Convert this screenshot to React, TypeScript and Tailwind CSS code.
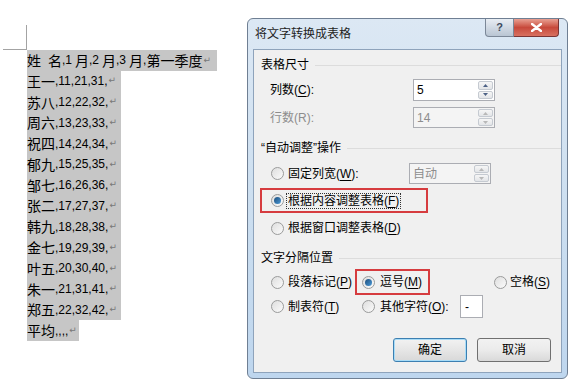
import React from "react";

const cjk = { fontFamily: '"Liberation Sans", "Noto Sans CJK SC", sans-serif' };

const rows: [string, string][] = [
  ["王一", ",11,21,31,"],
  ["苏八", ",12,22,32,"],
  ["周六", ",13,23,33,"],
  ["祝四", ",14,24,34,"],
  ["郁九", ",15,25,35,"],
  ["邹七", ",16,26,36,"],
  ["张二", ",17,27,37,"],
  ["韩九", ",18,28,38,"],
  ["金七", ",19,29,39,"],
  ["叶五", ",20,30,40,"],
  ["朱一", ",21,31,41,"],
  ["郑五", ",22,32,42,"],
];

function Ret() {
  return <span className="ml-[1px] text-[9px] text-[#777]" style={{ fontFamily: '"DejaVu Sans", sans-serif' }}>↵</span>;
}

function Han({ children }: { children: React.ReactNode }) {
  return <span className="text-[14px]" style={{ fontFamily: '"Noto Sans CJK SC", sans-serif' }}>{children}</span>;
}

function Num({ children }: { children: React.ReactNode }) {
  return <span className="text-[12px]" style={{ fontFamily: '"Liberation Sans", sans-serif' }}>{children}</span>;
}

function Radio({ on = false }: { on?: boolean }) {
  return (
    <span className="flex size-[13px] shrink-0 items-center justify-center rounded-full border border-[#9a9b9b] bg-gradient-to-br from-[#dedede] to-[#fbfbfb]">
      {on && <span className="size-[7px] rounded-full bg-gradient-to-br from-[#1e4e7c] to-[#4a9ad8]" />}
    </span>
  );
}

function U({ children }: { children: React.ReactNode }) {
  return <span className="underline underline-offset-[2px]">{children}</span>;
}

function Spin({ disabled = false }: { disabled?: boolean }) {
  const tri = disabled ? "#b8b8b8" : "#4d6185";
  return (
    <div className="flex w-[16px] flex-col gap-[1px] self-stretch py-[1px] pr-[1px]">
      <div className="flex flex-1 items-center justify-center rounded-[2px] border border-[#c5cad1] bg-gradient-to-b from-[#f6f6f6] to-[#e3e5e8]">
        <svg width="5" height="3" viewBox="0 0 5 3"><path d="M0 3 L2.5 0 L5 3Z" fill={tri} /></svg>
      </div>
      <div className="flex flex-1 items-center justify-center rounded-[2px] border border-[#c5cad1] bg-gradient-to-b from-[#f6f6f6] to-[#e3e5e8]">
        <svg width="5" height="3" viewBox="0 0 5 3"><path d="M0 0 L2.5 3 L5 0Z" fill={tri} /></svg>
      </div>
    </div>
  );
}

function NumBox({ value, disabled = false, h = "h-[22px]" }: { value: string; disabled?: boolean; h?: string }) {
  return (
    <div className={`flex ${h} w-[82px] items-center border border-[#abadb3] ${disabled ? "bg-[#f4f4f4] text-[#8d8d8d]" : "bg-white text-black"}`}>
      <span className="flex-1 pl-[3px] text-[12px]">{value}</span>
      <Spin disabled={disabled} />
    </div>
  );
}

function Group({ label }: { label: string }) {
  return (
    <div className="flex h-[16px] items-center gap-[6px] pl-[7px]">
      <span className="text-[12px] leading-none">{label}</span>
      <span className="h-px flex-1 bg-[#dcdcdc]" />
    </div>
  );
}

function Dialog() {
  return (
    <div className="flex h-[361px] w-[321px] flex-col rounded-[6px] border border-[#6f7f93] bg-gradient-to-b from-[#dce8f4] via-[#cddff0] to-[#bed6ee] px-[5px] pb-[5px]" style={cjk}>
      <div className="flex h-[30px] shrink-0 items-start">
        <span className="mt-[6px] pl-[2px] text-[12px] text-[#1e1e1e]">将文字转换成表格</span>
        <div className="ml-auto mr-[3px] flex h-[18px]">
          <div className="flex w-[29px] items-center justify-center rounded-bl-[4px] border border-t-0 border-[#7b8797] bg-gradient-to-b from-[#e8edf3] to-[#b9c5d3] text-[11px] font-bold text-[#3d4a5c]">?</div>
          <div className="flex w-[45px] items-center justify-center rounded-br-[4px] border border-l-0 border-t-0 border-[#7a3434] bg-gradient-to-b from-[#e8a093] via-[#c7493b] to-[#d87060]">
            <svg width="11" height="9" viewBox="0 0 11 9"><path d="M1 1 L10 8 M10 1 L1 8" stroke="#fff" strokeWidth="2.4" strokeLinecap="round" /></svg>
          </div>
        </div>
      </div>
      <div className="flex flex-1 flex-col border border-[#8ea3bb] bg-[#f0f0f0] pt-[7px] text-black">
        <Group label="表格尺寸" />
        <div className="mt-[6px] flex items-center pl-[16px]">
          <span className="w-[143px] text-[12px]">列数(<U>C</U>):</span>
          <NumBox value="5" />
        </div>
        <div className="mt-[6px] flex items-center pl-[16px]">
          <span className="w-[143px] text-[12px] text-[#8d8d8d]">行数(R):</span>
          <NumBox value="14" disabled h="h-[21px]" />
        </div>
        <div className="mt-[12px]">
          <Group label="“自动调整”操作" />
        </div>
        <div className="mt-[7px] flex h-[21px] items-center pl-[17px]">
          <Radio />
          <span className="ml-[4px] w-[121px] text-[12px]">固定列宽(<U>W</U>):</span>
          <NumBox value="自动" disabled h="h-[21px]" />
        </div>
        <div className="ml-[6px] mt-[4px] flex h-[25px] w-[168px] items-center border-2 border-[#d63c3f] pl-[9px]">
          <Radio on />
          <span className="ml-[2px] border border-dotted border-[#333] px-[1px] text-[12px] leading-[14px]">根据内容调整表格(<U>F</U>)</span>
        </div>
        <div className="mt-[6px] flex h-[18px] items-center pl-[17px]">
          <Radio />
          <span className="ml-[4px] text-[12px]">根据窗口调整表格(<U>D</U>)</span>
        </div>
        <div className="mt-[13px]">
          <Group label="文字分隔位置" />
        </div>
        <div className="mt-[3px] flex h-[26px] items-center pl-[17px]">
          <div className="flex w-[84px] items-center">
            <Radio />
            <span className="ml-[4px] text-[12px]">段落标记(<U>P</U>)</span>
          </div>
          <div className="flex h-[26px] w-[75px] items-center border-2 border-[#d63c3f] pl-[5px]">
            <Radio on />
            <span className="ml-[5px] text-[12px]">逗号(<U>M</U>)</span>
          </div>
          <div className="ml-[64px] flex items-center">
            <Radio />
            <span className="ml-[3px] text-[12px]">空格(<U>S</U>)</span>
          </div>
        </div>
        <div className="flex h-[23px] items-center pl-[17px]">
          <div className="flex w-[91px] items-center">
            <Radio />
            <span className="ml-[4px] text-[12px]">制表符(<U>T</U>)</span>
          </div>
          <Radio />
          <span className="ml-[5px] w-[80px] text-[12px]">其他字符(<U>O</U>):</span>
          <div className="flex h-[23px] w-[23px] items-center border border-[#abadb3] bg-white pl-[4px] text-[12px]">-</div>
        </div>
        <div className="mt-[20px] flex gap-[10px] pl-[139px]">
          <button className="h-[24px] w-[74px] rounded-[3px] border border-[#3c7fb1] bg-gradient-to-b from-[#f2f2f2] via-[#e6e6e6] to-[#d8d8d8] text-[12px] shadow-[inset_0_0_0_1px_#a8dcf7]">确定</button>
          <button className="h-[24px] w-[74px] rounded-[3px] border border-[#707070] bg-gradient-to-b from-[#f2f2f2] via-[#ebebeb] to-[#d9d9d9] text-[12px]">取消</button>
        </div>
      </div>
    </div>
  );
}

export default function App() {
  return (
    <div className="relative flex h-[380px] w-[581px] overflow-hidden bg-white">
      <div className="absolute left-[3px] top-[49px] h-px w-[24px] bg-[#a3a3a3]" />
      <div className="absolute left-[26px] top-[25px] h-[24px] w-px bg-[#a3a3a3]" />
      <div className="ml-[27px] mt-[50px] flex flex-col text-black">
        <div className="flex h-[20.8px] w-[190px] items-center whitespace-nowrap bg-[#c6c6c6]">
          <Han>姓</Han><span className="w-[7px]" /><Han>名</Han><Num>,1</Num><span className="w-[3px]" /><Han>月</Han><Num>,2</Num><span className="w-[3px]" /><Han>月</Han><Num>,3</Num><span className="w-[3px]" /><Han>月</Han><Num>,</Num><Han>第一季度</Han><Ret />
        </div>
        {rows.map(([n, v]) => (
          <div key={n} className="flex h-[20.8px] w-[94px] items-center whitespace-nowrap bg-[#c6c6c6]">
            <Han>{n}</Han><Num>{v}</Num><Ret />
          </div>
        ))}
        <div className="flex h-[20.8px] w-[52px] items-center whitespace-nowrap bg-[#c6c6c6]">
          <Han>平均</Han><Num>,,,,</Num><Ret />
        </div>
      </div>
      <div className="ml-[30px] mt-[18px]">
        <Dialog />
      </div>
    </div>
  );
}
